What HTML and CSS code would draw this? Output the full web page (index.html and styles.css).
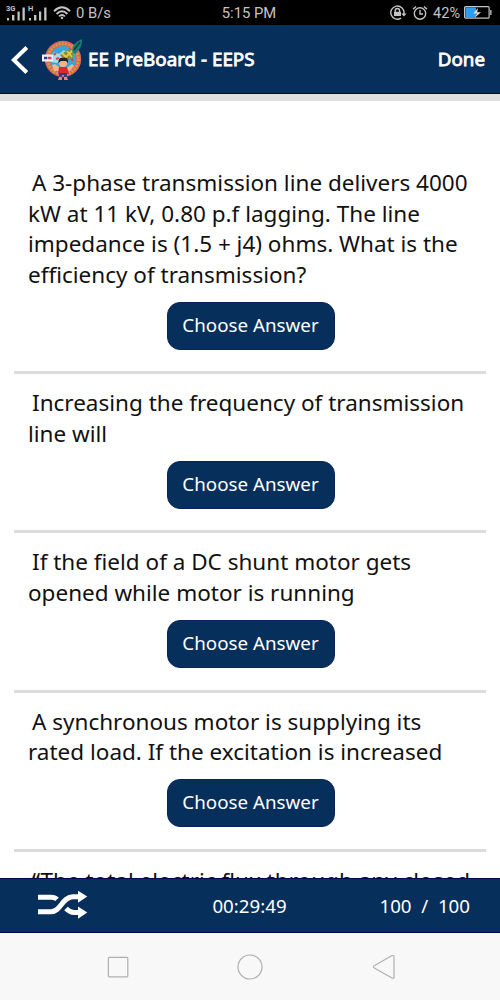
FILE: index.html
```html
<!DOCTYPE html>
<html lang="en">
  <head>
    <meta charset="UTF-8" />
    <meta name="viewport" content="width=device-width, initial-scale=1.0" />
    <title>EE PreBoard - EEPS</title>
    <link rel="stylesheet" href="styles.css">
  </head>
  <body>
    <!-- Status bar -->
    <div class="status-bar">
      <div class="status-left">
        <svg class="signal" width="42" height="18" viewBox="0 0 42 18" fill="#c4c4c4">
          <text x="0" y="7" font-size="7.5" font-weight="700">3G</text>
          <path d="M1 14h2v2.5H1zM6 11h2.4v5.5H6zM11.5 7.5h2.2v9h-2.2zM16.5 3.5h2.3v13h-2.3z" />
          <text x="22" y="7" font-size="7.5" font-weight="700">H</text>
          <path d="M23 14h2v2.5h-2zM28 11h2.4v5.5H28zM33 7.5h2.2v9H33zM38.2 3.5h2.3v13h-2.3z" />
        </svg>
        <svg class="wifi" width="18" height="14" viewBox="0 0 18 14" fill="none" stroke="#c4c4c4" stroke-width="1.9">
          <path d="M1 5.2Q9-2.5 17 5.2M3.6 8Q9 2.7 14.4 8M6.1 10.4Q9 7.7 11.9 10.4" />
          <circle cx="9" cy="12" r="1.2" fill="#c4c4c4" stroke="none" />
        </svg>
        <span class="speed">0 B/s</span>
      </div>
      <div class="clock">5:15 PM</div>
      <div class="status-right">
        <svg width="17" height="16" viewBox="0 0 17 16" fill="none" stroke="#c4c4c4" stroke-width="1.4">
          <path d="M11 13.2A6.6 6.6 0 1 1 14 8M14 8v2" />
          <path d="M11.2 8.4h5.4l-2.7 3z" fill="#c4c4c4" stroke="none" />
          <path d="M5.2 7V5.7a2.2 2.2 0 0 1 4.4 0V7" />
          <path d="M4 6.8h7V11H4z" fill="#c4c4c4" stroke="none" />
        </svg>
        <svg class="alarm" width="16" height="16" viewBox="0 0 16 16" fill="none" stroke="#c4c4c4" stroke-width="1.4">
          <circle cx="8" cy="8.5" r="5.7" />
          <path d="M8 5v4h3M1 4.2l3-2.7M15 4.2l-3-2.7" />
        </svg>
        <span class="percent">42%</span>
        <svg class="battery" width="28" height="14" viewBox="0 0 28 14">
          <rect x="1.5" y="1.5" width="10.5" height="10" fill="#2c9df5" />
          <rect x=".6" y=".6" width="24.5" height="11.6" rx="1" fill="none" stroke="#c4c4c4" stroke-width="1.2" />
          <path d="M26.2 4h1.3v5h-1.3z" fill="#c4c4c4" />
          <path d="M14 2L9.2 7.4h3.5L11.3 11.2 17 6.2h-3.8z" fill="#e2e2e2" />
        </svg>
      </div>
    </div>

    <!-- Header -->
    <header class="header">
      <svg class="back" width="18" height="28" viewBox="0 0 18 28" fill="none" stroke="#fff" stroke-width="4">
        <path d="M15.8 1.5L2.8 14l13 12.5" />
      </svg>
      <svg class="logo" width="42" height="42" viewBox="0 0 42 42">
        <circle cx="21" cy="20" r="18.2" fill="#df625d" />
        <circle cx="21" cy="20" r="15.3" fill="none" stroke="#c8a33d" stroke-width="2.8" stroke-dasharray="2 1.2" />
        <circle cx="21" cy="20" r="13" fill="#38a6d8" />
        <path d="M12 13l5 2 5-4 4 5-6 3-5 5-6-1z" fill="#a5dcec" />
        <path d="M12 16l2-2M14 20l3-1M27 10l5 3M29 19l2 3" stroke="#d9463a" stroke-width="2" />
        <path d="M18 16l9-6 6 2-3 8-7 2z" fill="#7d9140" />
        <path d="M20 14l4 4 8-8M25 12l5 6" fill="none" stroke="#e9c83c" stroke-width="1.8" />
        <path d="M30 12q1-9 10-12 1 8-7 15z" fill="#167f74" />
        <path d="M32 11l6-8" stroke="#133f36" stroke-width="1.4" />
        <path d="M12 32l-2-6 3-1 4 3h9l4-3 2 2-4 5z" fill="#efb48d" />
        <circle cx="21" cy="24" r="4.2" fill="#f0b28e" />
        <path d="M16.5 24q-.5-6 5-5 5-1 4.5 5l-2-2h-5z" fill="#251d23" />
        <path d="M17 28h8l2 7H16z" fill="#df2630" />
        <path d="M17 34h8v4h-3v-2h-2v2h-3z" fill="#24457d" />
        <path d="M17 38h3v3h-4zM22 38h3l1 3h-4z" fill="#ef8077" />
        <rect x="0" y="15.5" width="11" height="7" fill="#f5f0f5" />
        <path d="M2 19h3" stroke="#29429a" stroke-width="2.5" />
        <path d="M5.5 19h4" stroke="#d94251" stroke-width="2.5" />
      </svg>
      <h1>EE PreBoard - EEPS</h1>
      <span class="done">Done</span>
    </header>

    <!-- Question list -->
    <main class="questions">
      <section class="question">
        <p>A 3-phase transmission line delivers 4000<br>kW at 11 kV, 0.80 p.f lagging. The line<br>impedance is (1.5 + j4) ohms. What is the<br>efficiency of transmission?</p>
        <button class="choose-btn">Choose Answer</button>
      </section>
      <section class="question">
        <p>Increasing the frequency of transmission<br>line will</p>
        <button class="choose-btn">Choose Answer</button>
      </section>
      <section class="question">
        <p>If the field of a DC shunt motor gets<br>opened while motor is running</p>
        <button class="choose-btn">Choose Answer</button>
      </section>
      <section class="question">
        <p>A synchronous motor is supplying its<br>rated load. If the excitation is increased</p>
        <button class="choose-btn">Choose Answer</button>
      </section>
      <section class="question">
        <p>“The total electric flux through any closed</p>
      </section>
    </main>

    <!-- Timer bar -->
    <footer class="timer-bar">
      <svg class="shuffle" width="50" height="30" viewBox="0 0 50 30">
        <path d="M0 21.8h13c10 0 11-15 22-15h6" fill="none" stroke="#fff" stroke-width="5" />
        <path d="M0 7.2h13q4 0 6 2.2" fill="none" stroke="#fff" stroke-width="5" />
        <path d="M28 18.5q4 4 8 4h5" fill="none" stroke="#fff" stroke-width="5" />
        <path d="M40 .8l9.3 5.8L40 12.8zM40 16.4l9.3 6.1-9.3 6.2z" fill="#fff" />
      </svg>
      <span class="time">00:29:49</span>
      <span class="count">100&nbsp; /&nbsp; 100</span>
    </footer>

    <!-- Android navigation -->
    <nav class="nav-bar">
      <svg width="24" height="28" viewBox="0 0 24 28" fill="none" stroke="#b0b0b0" stroke-width="1.2">
        <rect x="2.4" y="4.3" width="19.4" height="19.6" rx="1" />
      </svg>
      <svg width="28" height="28" viewBox="0 0 28 28" fill="none" stroke="#b0b0b0" stroke-width="1.2">
        <circle cx="13" cy="14" r="12" />
      </svg>
      <svg width="24" height="28" viewBox="0 0 24 28" fill="none" stroke="#b0b0b0" stroke-width="1.2">
        <path d="M2.3 12.8L19.5 2.8Q22 1.8 22 4v20q0 2-2 1L2.3 15Q.5 14 2.3 12.8z" />
      </svg>
    </nav>
  </body>
</html>
```
FILE: styles.css
```css
* {
  margin: 0;
  padding: 0;
  box-sizing: border-box;
}

body {
  display: flex;
  flex-direction: column;
  height: 1000px;
  overflow: hidden;
  background: white;
  font-family: "Noto Sans", sans-serif;
}

svg {
  display: block;
  flex-shrink: 0;
}

/* Status bar */
.status-bar {
  display: grid;
  grid-template-columns: 1fr auto 1fr;
  align-items: center;
  height: 25px;
  padding: 0 8px 0 6px;
  background: black;
  color: #c4c4c4;
  font-family: Roboto, sans-serif;
  font-size: 14.8px;
  line-height: 25px;
}

.clock {
  padding-top: 1px;
}

.status-left,
.status-right {
  display: flex;
  align-items: center;
}

.status-right {
  justify-content: flex-end;
}

.wifi,
.speed,
.alarm,
.percent {
  margin-left: 5px;
}

.percent {
  font-size: 14.5px;
}

.battery {
  margin-left: 4px;
}

/* Header */
.header {
  display: flex;
  align-items: center;
  height: 76px;
  padding: 0 15px 0 11px;
  background: #072f5b;
  border-bottom: 7px solid #dedede;
  box-shadow: inset 0 -1px #04054a;
  color: white;
  flex-shrink: 0;
}

.logo {
  margin-left: 13px;
}

h1,
.done {
  padding-bottom: 1px;
  font-size: 18.8px;
  font-weight: 400;
  line-height: 30px;
  -webkit-text-stroke: 0.8px white;
}

h1 {
  margin-left: 4px;
}

.done {
  margin-left: auto;
}

/* Questions */
.questions {
  flex: 1;
  min-height: 0;
  overflow: hidden;
  padding: 67px 14px 0;
}

.question {
  padding: 0 14px 21.3px;
  margin-bottom: 14px;
  border-bottom: 3px solid #dcdcdc;
}

.question p {
  font-size: 22.5px;
  line-height: 30.5px;
  color: #111;
  text-indent: 4px;
  white-space: nowrap;
}

.choose-btn {
  display: block;
  width: 168px;
  height: 48.4px;
  margin: 11.5px 0 0 138.5px;
  padding-bottom: 2px;
  border: 1px solid #08245a;
  border-radius: 13px;
  background: #072f5b;
  color: white;
  font-family: inherit;
  font-size: 18.8px;
  cursor: pointer;
}

/* Timer bar */
.timer-bar {
  display: grid;
  grid-template-columns: 1fr auto 1fr;
  align-items: center;
  height: 55px;
  padding: 0 30px 1px 29px;
  border-top: 1px solid #04054a;
  border-bottom: 1px solid #04054a;
  background: #072f5b;
  color: white;
  font-size: 18.7px;
  flex-shrink: 0;
}

.shuffle {
  margin-left: 9px;
}

.count {
  text-align: right;
}

/* Navigation */
.nav-bar {
  display: flex;
  justify-content: space-between;
  align-items: center;
  height: 67px;
  padding: 0 104px 0 106px;
  background: #f8f8f8;
  flex-shrink: 0;
}
```
